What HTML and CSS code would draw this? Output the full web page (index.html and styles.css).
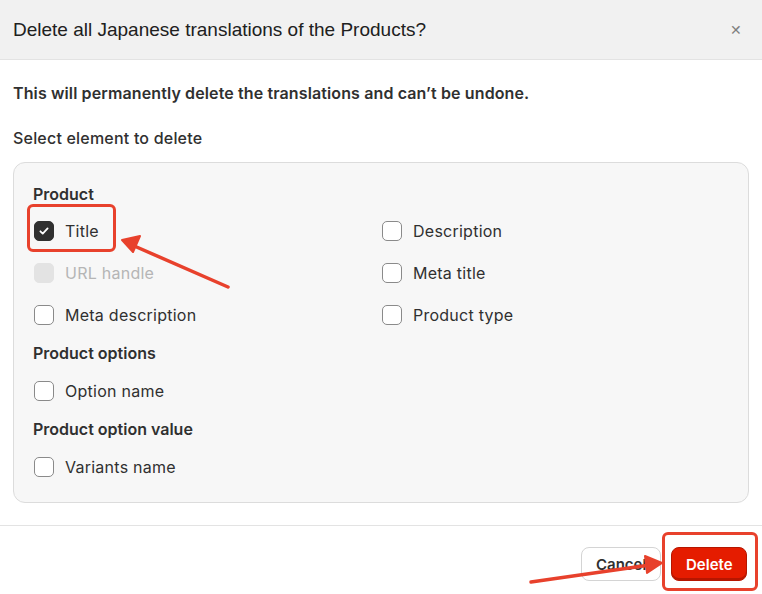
FILE: index.html
```html
<!DOCTYPE html>
<html lang="en">
<head>
  <meta charset="UTF-8">
  <title>Delete translations</title>
  <link rel="stylesheet" href="styles.css">
</head>
<body>
  <div class="modal">
    <div class="modal-header">
      <h2>Delete all Japanese translations of the Products?</h2>
      <span class="close">&#x2715;</span>
    </div>

    <div class="modal-body">
      <p class="warning">This will permanently delete the translations and can’t be undone.</p>
      <p class="select-label">Select element to delete</p>

      <div class="card">
        <h4>Product</h4>
        <div class="grid">
          <label class="check"><span class="box checked"><svg viewBox="0 0 20 20" width="20" height="20"><path d="M6 10.3l2.6 2.6L14 7.2" fill="none" stroke="#fff" stroke-width="2" stroke-linecap="round" stroke-linejoin="round"/></svg></span>Title</label>
          <label class="check"><span class="box"></span>Description</label>
          <label class="check disabled"><span class="box"></span>URL handle</label>
          <label class="check"><span class="box"></span>Meta title</label>
          <label class="check"><span class="box"></span>Meta description</label>
          <label class="check"><span class="box"></span>Product type</label>
        </div>

        <h4>Product options</h4>
        <div class="grid grid-small">
          <label class="check"><span class="box"></span>Option name</label>
        </div>

        <h4>Product option value</h4>
        <div class="grid grid-small">
          <label class="check"><span class="box"></span>Variants name</label>
        </div>
      </div>
    </div>

    <div class="modal-footer">
      <button class="btn btn-cancel">Cancel</button>
      <button class="btn btn-delete">Delete</button>
    </div>
  </div>

  <!-- annotations -->
  <div class="mark mark-title"></div>
  <div class="mark mark-delete"></div>
  <svg class="arrows" width="762" height="594" viewBox="0 0 762 594">
    <g stroke="#e8412c" stroke-width="3.5" stroke-linecap="round" fill="#e8412c">
      <line x1="228" y1="287" x2="132" y2="245"/>
      <polygon points="122,240 140,236 133,252" stroke-width="2" stroke-linejoin="round"/>
      <line x1="531" y1="582" x2="650" y2="565"/>
      <polygon points="662,563 645,556 647,573" stroke-width="2" stroke-linejoin="round"/>
    </g>
  </svg>
</body>
</html>
```

FILE: styles.css
```css
body {
  margin: 0;
  font-family: Inter, "Noto Sans", sans-serif;
  color: #303030;
  background-color: #fff;
}

.modal {
  width: 762px;
  height: 594px;
  display: flex;
  flex-direction: column;
  background-color: #fff;
}

.modal-header {
  height: 60px;
  background-color: #f1f1f1;
  border-bottom: 1px solid #e3e3e3;
  display: flex;
  align-items: center;
  justify-content: space-between;
  padding: 0 20px 0 13px;
  box-sizing: border-box;
}

.modal-header h2 {
  margin: 0;
  font-family: "Liberation Sans", Arial, sans-serif;
  font-size: 19px;
  font-weight: normal;
  color: #202020;
}

.close {
  font-size: 14px;
  color: #808080;
}

.modal-body {
  padding: 23px 13px 0 13px;
}

.warning {
  margin: 0;
  font-size: 16px;
  font-weight: 600;
  letter-spacing: 0.12px;
  line-height: 20px;
}

.select-label {
  margin: 25px 0 0 0;
  font-size: 16px;
  font-weight: 500;
  letter-spacing: 0.2px;
  line-height: 20px;
}

.card {
  margin-top: 14px;
  height: 341px;
  box-sizing: border-box;
  background-color: #f7f7f7;
  border: 1px solid #dcdcdc;
  border-radius: 12px;
  padding: 21px 19px;
}

.card h4 {
  margin: 0;
  font-size: 16px;
  font-weight: 600;
  line-height: 20px;
}

.grid {
  display: grid;
  grid-template-columns: 348px 1fr;
  row-gap: 22px;
  margin: 17px 0 18px 0;
}

.grid-small {
  margin-top: 18px;
}

.check {
  display: flex;
  align-items: center;
  gap: 11px;
  font-size: 16px;
  letter-spacing: 0.25px;
  line-height: 20px;
  color: #303030;
}

.box {
  width: 18px;
  height: 18px;
  border: 1px solid #8a8a8a;
  border-radius: 5px;
  background-color: #fff;
  display: flex;
  align-items: center;
  justify-content: center;
  margin-left: 1px;
}

.box.checked {
  background-color: #303030;
  border-color: #303030;
}

.check.disabled {
  color: #b5b5b5;
}

.check.disabled .box {
  background-color: #e3e3e3;
  border-color: #e3e3e3;
}

.modal-footer {
  margin-top: 22px;
  border-top: 1px solid #e3e3e3;
  display: flex;
  justify-content: flex-end;
  gap: 10px;
  padding: 21px 15px 0 0;
}

.btn {
  height: 34px;
  border-radius: 8px;
  font-family: Inter, "Noto Sans", sans-serif;
  font-size: 15px;
  font-weight: 600;
  padding: 0 14px;
}

.btn-cancel {
  width: 80px;
  background-color: #fff;
  border: 1px solid #d4d4d4;
  color: #303030;
}

.btn-delete {
  width: 76px;
  background-color: #e51c00;
  border: 1px solid #b51600;
  color: #fff;
  box-shadow: inset 0 -2px 0 rgba(0, 0, 0, 0.2);
}

.mark {
  position: absolute;
  border: 3px solid #e8412c;
  border-radius: 6px;
  box-sizing: border-box;
}

.mark-title {
  left: 27px;
  top: 204px;
  width: 89px;
  height: 48px;
}

.mark-delete {
  left: 662px;
  top: 532px;
  width: 96px;
  height: 59px;
}

.arrows {
  position: absolute;
  left: 0;
  top: 0;
}
```
